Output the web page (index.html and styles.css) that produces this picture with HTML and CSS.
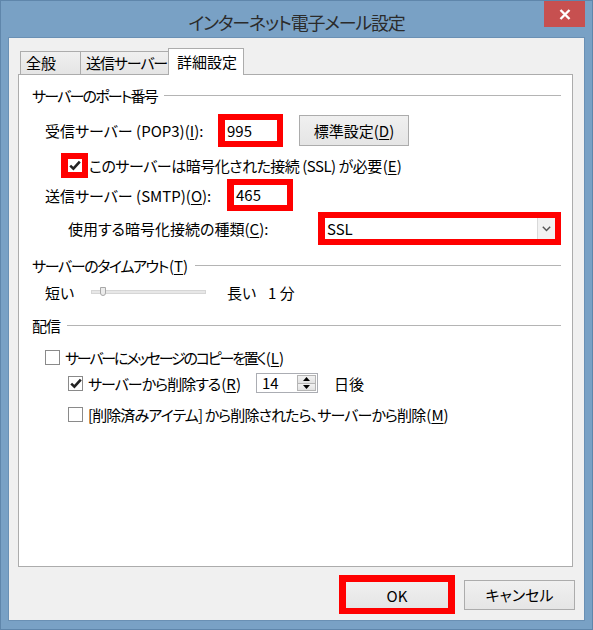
FILE: index.html
```html
<!DOCTYPE html>
<html lang="ja">
<head>
<meta charset="utf-8">
<title>インターネット電子メール設定</title>
<link rel="stylesheet" href="styles.css">
</head>
<body>
<div class="window">
  <div class="titlebar">
    <div class="title">インターネット電子メール設定</div>
    <div class="close">
      <svg width="12" height="11" viewBox="0 0 12 11"><path d="M1.5 1 L10.5 10 M10.5 1 L1.5 10" stroke="#fff" stroke-width="2.4" fill="none"/></svg>
    </div>
  </div>
  <div class="client">
    <div class="tabs">
      <div class="tab t1">全般</div>
      <div class="tab t2">送信サーバー</div>
      <div class="tab t3 active">詳細設定</div>
    </div>
    <div class="panel">
      <div class="group-head"><span class="sp-18">サーバーのポート番号</span><div class="rule"></div></div>

      <div class="row r-pop">
        <span class="lbl w-pop">受信サーバー (POP3)(<u>I</u>):</span>
        <span class="hl port"><span class="field">995</span></span>
        <span class="btn defbtn">標準設定(<u>D</u>)</span>
      </div>

      <div class="row r-ssl">
        <span class="hl chk-hl"><span class="chk-inner">
          <svg width="12" height="11" viewBox="0 0 12 11"><path d="M1.2 5.6 L4.4 8.6 L10.8 1.6" stroke="#222" stroke-width="2.6" fill="none"/></svg>
        </span></span>
        <span class="lbl sp-05">このサーバーは暗号化された接続 (SSL) が必要<span class="ak">(<u>E</u>)</span></span>
      </div>

      <div class="row r-smtp">
        <span class="lbl w-smtp">送信サーバー (SMTP)(<u>O</u>):</span>
        <span class="hl port2"><span class="field">465</span></span>
      </div>

      <div class="row r-enc">
        <span class="lbl w-enc">使用する暗号化接続の種類(<u>C</u>):</span>
        <span class="hl sel">
          <span class="sel-val">SSL</span>
          <span class="sel-arrow"><svg width="9" height="6" viewBox="0 0 9 6"><path d="M0.8 0.8 L4.5 4.6 L8.2 0.8" stroke="#555" stroke-width="1.4" fill="none"/></svg></span>
        </span>
      </div>

      <div class="group-head g2"><span class="sp-14">サーバーのタイムアウト<span class="ak">(<u>T</u>)</span></span><div class="rule"></div></div>

      <div class="row r-slide">
        <span class="lbl w-short">短い</span>
        <span class="slider"><span class="track"></span><span class="thumb"></span></span>
        <span class="lbl w-long">長い</span>
        <span class="lbl">1 分</span>
      </div>

      <div class="group-head g3"><span class="sp-10">配信</span><div class="rule"></div></div>

      <div class="row r-c1">
        <span class="cb"></span>
        <span class="lbl sp-22">サーバーにメッセージのコピーを置く<span class="ak">(<u>L</u>)</span></span>
      </div>

      <div class="row r-c2">
        <span class="cb"><svg width="12" height="11" viewBox="0 0 12 11"><path d="M1.2 5.6 L4.4 8.6 L10.8 1.6" stroke="#222" stroke-width="2.6" fill="none"/></svg></span>
        <span class="lbl w-del sp-10">サーバーから削除する<span class="ak">(<u>R</u>)</span></span>
        <span class="spin">
          <span class="spin-val">14</span>
          <span class="spin-btns">
            <span class="sb"><svg width="7" height="4" viewBox="0 0 7 4"><path d="M0 4 L3.5 0 L7 4 Z" fill="#000"/></svg></span>
            <span class="sb"><svg width="7" height="4" viewBox="0 0 7 4"><path d="M0 0 L3.5 4 L7 0 Z" fill="#000"/></svg></span>
          </span>
        </span>
        <span class="lbl days">日後</span>
      </div>

      <div class="row r-c3">
        <span class="cb"></span>
        <span class="lbl sp-09">[削除済みアイテム] から削除されたら、サーバーから削除<span class="ak">(<u>M</u>)</span></span>
      </div>
    </div>
    <div class="buttons">
      <span class="btn ok">OK</span>
      <span class="btn cancel">キャンセル</span>
    </div>
  </div>
</div>
</body>
</html>
```
FILE: styles.css
```css
* { box-sizing: border-box; }
html, body { margin: 0; padding: 0; }
body {
  font-family: "Noto Sans CJK JP", "Noto Sans", sans-serif;
  font-feature-settings: "palt";
  font-size: 15px;
  color: #000;
  background: #78a0c4;
}
u { text-decoration: underline; text-underline-offset: 2px; }

.sp-05 { letter-spacing: -0.5px; }
.sp-09 { letter-spacing: -0.9px; }
.sp-10 { letter-spacing: -1px; }
.sp-14 { letter-spacing: -1.4px; }
.sp-18 { letter-spacing: -1.8px; }
.sp-22 { letter-spacing: -2.2px; }
.ak { letter-spacing: 0; margin-left: 1px; }

.window {
  width: 593px;
  height: 630px;
  background: #79a1c5;
  border: 1px solid #5f86ab;
  display: flex;
  flex-direction: column;
}
.titlebar {
  height: 36px;
  display: grid;
  grid-template-columns: 1fr auto 1fr;
  align-items: start;
}
.title {
  grid-column: 2;
  font-size: 18px;
  letter-spacing: -1.2px;
  color: #2b2b2b;
  line-height: 34px;
  padding-top: 4px;
  white-space: nowrap;
}
.close {
  grid-column: 3;
  justify-self: end;
  width: 41px;
  height: 26px;
  margin-right: 7px;
  background: #c75050;
  display: flex;
  align-items: center;
  justify-content: center;
}

.client {
  margin: 0 7px 0 7px;
  height: 584px;
  background: #f0f0f0;
  border: 1px solid #6a90b4;
  padding-top: 10px;
}
.tabs {
  display: flex;
  align-items: flex-end;
  height: 26px;
  margin-left: 11px;
}
.tab {
  height: 23px;
  border: 1px solid #acacac;
  border-bottom: none;
  background: linear-gradient(#f0f0f0, #e5e5e5);
  line-height: 21px;
  padding-left: 5px;
  white-space: nowrap;
}
.t1 { width: 61px; }
.t2 { width: 89px; margin-left: -1px; letter-spacing: -1.1px; }
.t3 {
  width: 76px;
  margin-left: -1px;
  height: 27px;
  margin-bottom: -1px;
  background: #fff;
  line-height: 25px;
  padding-left: 8px;
  position: relative;
  z-index: 1;
}

.panel {
  margin: 0 11px 0 9px;
  height: 493px;
  background: #fff;
  border: 1px solid #acacac;
  padding: 10px 11px 0 13px;
}
.group-head {
  display: flex;
  align-items: center;
  height: 20px;
  gap: 7px;
  white-space: nowrap;
}
.group-head .rule {
  flex: 1;
  height: 1px;
  background: #b4b4b4;
}
.g2 { margin-top: 10px; }
.g3 { margin-top: 13px; }

.row {
  display: flex;
  align-items: center;
  white-space: nowrap;
}
.lbl { display: inline-block; }

.r-pop { height: 33px; margin-top: 9px; margin-left: 13px; }
.w-pop { width: 173px; }
.r-ssl { height: 25px; margin-top: 6px; margin-left: 29px; }
.r-smtp { height: 32px; margin-top: 1px; margin-left: 13px; }
.w-smtp { width: 182px; }
.r-enc { height: 33px; margin-top: 1px; margin-left: 36px; }
.w-enc { width: 251px; }

.hl {
  border: 6px solid #ff0000;
  border-left-width: 7px;
  background: #fff;
  display: flex;
  align-items: center;
}
.port { width: 65px; height: 33px; }
.port2 { width: 66px; height: 32px; }
.field { padding-left: 2px; line-height: 20px; }

.chk-hl { width: 27px; height: 25px; }
.chk-inner {
  width: 14px;
  height: 13px;
  display: flex;
  align-items: center;
  justify-content: center;
  background: #fff;
}
.r-ssl .lbl { margin-left: 1px; }

.sel { width: 244px; height: 33px; justify-content: space-between; }
.sel-val { padding-left: 2px; }
.sel-arrow {
  width: 18px;
  height: 100%;
  border-left: 1px solid #d9d9d9;
  background: #f2f2f2;
  display: flex;
  align-items: center;
  justify-content: center;
}

.btn {
  display: flex;
  align-items: center;
  justify-content: center;
  border: 1px solid #acacac;
  background: linear-gradient(#f0f0f0, #e5e5e5);
  white-space: nowrap;
}
.defbtn { width: 110px; height: 31px; margin-left: 16px; }

.r-slide { height: 20px; margin-top: 7px; margin-left: 13px; }
.w-short { width: 46px; }
.slider {
  width: 115px;
  height: 20px;
  display: flex;
  align-items: center;
  position: relative;
  margin-right: 21px;
}
.track {
  width: 100%;
  height: 4px;
  background: #e7e7e7;
  border: 1px solid #d6d6d6;
}
.thumb {
  position: absolute;
  left: 9px;
  top: 5px;
  width: 6px;
  height: 9px;
  background: #ececec;
  border: 1px solid #a8a8a8;
  border-radius: 0 0 3px 3px;
}
.w-long { width: 41px; }

.cb {
  width: 15px;
  height: 15px;
  border: 1px solid #8a8a8a;
  background: #fff;
  display: flex;
  align-items: center;
  justify-content: center;
  margin-right: 5px;
}
.r-c1 { height: 20px; margin-top: 12px; margin-left: 13px; }
.r-c2 { height: 20px; margin-top: 6px; margin-left: 36px; }
.r-c3 { height: 20px; margin-top: 11px; margin-left: 36px; }
.w-del { width: 168px; }

.spin {
  width: 62px;
  height: 20px;
  border: 1px solid #abadb3;
  display: flex;
  justify-content: space-between;
  background: #fff;
}
.spin-val { padding-left: 5px; line-height: 18px; }
.spin-btns {
  width: 20px;
  display: flex;
  flex-direction: column;
  padding: 1px 1px 1px 0;
}
.sb {
  flex: 1;
  border: 1px solid #b5b5b5;
  background: linear-gradient(#f2f2f2, #e2e2e2);
  display: flex;
  align-items: center;
  justify-content: center;
}
.sb + .sb { margin-top: -1px; }
.days { margin-left: 16px; }

.buttons {
  display: flex;
  justify-content: flex-end;
  align-items: center;
  gap: 9px;
  margin-top: 8px;
  margin-right: 9px;
  height: 39px;
}
.ok {
  width: 116px;
  height: 39px;
  border: 7px solid #ff0000;
  border-bottom-width: 6px;
}
.cancel { width: 111px; height: 30px; }
```
